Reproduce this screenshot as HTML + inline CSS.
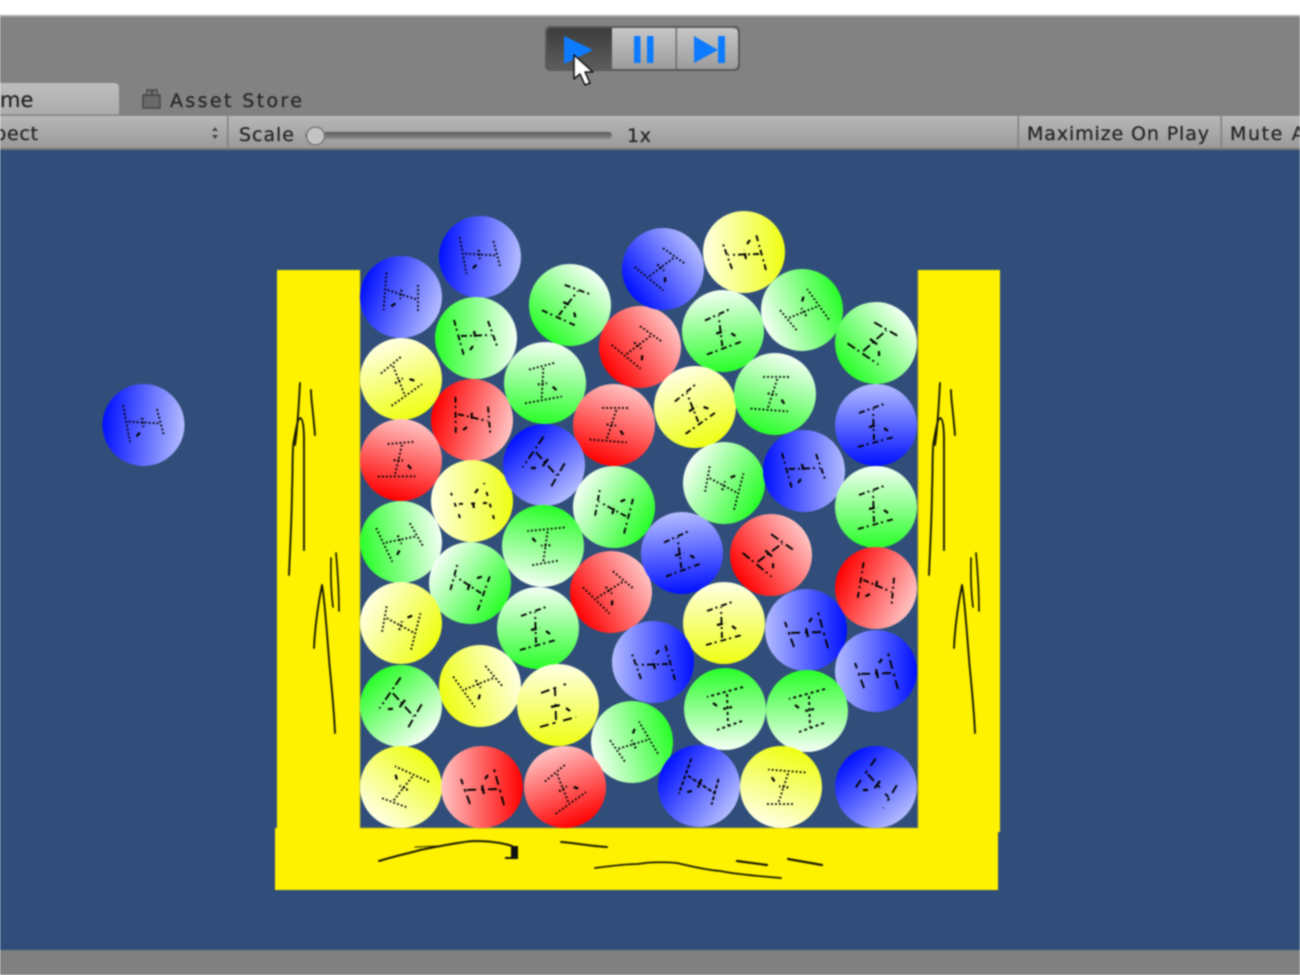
<!DOCTYPE html>
<html lang="en">
<head>
<meta charset="utf-8">
<title>Game view</title>
<style>
html,body{margin:0;padding:0;width:1300px;height:975px;overflow:hidden;background:#fff}
svg{display:block;filter:blur(.8px)}
text{font-family:"DejaVu Sans","Liberation Sans",sans-serif;font-size:19px;fill:#252525;stroke:#252525;stroke-width:.25}
.s{fill:none;stroke:#1a1a00;stroke-linecap:round;stroke-linejoin:round}
.g path{fill:none;stroke:#000;stroke-linecap:butt}
</style>
</head>
<body>
<svg width="1300" height="975" viewBox="0 0 1300 975" xmlns="http://www.w3.org/2000/svg">
<defs>
<linearGradient id="tb" x1="0" y1="0" x2="0" y2="1"><stop offset="0" stop-color="#b8b8b8"/><stop offset="1" stop-color="#999"/></linearGradient>
<linearGradient id="tab" x1="0" y1="0" x2="0" y2="1"><stop offset="0" stop-color="#bdbdbd"/><stop offset="1" stop-color="#ababab"/></linearGradient>
<linearGradient id="btn" x1="0" y1="0" x2="0" y2="1"><stop offset="0" stop-color="#c6c6c6"/><stop offset="1" stop-color="#9c9c9c"/></linearGradient>
<linearGradient id="btd" x1="0" y1="0" x2="0" y2="1"><stop offset="0" stop-color="#3c3c3c"/><stop offset="1" stop-color="#5c5c5c"/></linearGradient>
<linearGradient id="trk" x1="0" y1="0" x2="0" y2="1"><stop offset="0" stop-color="#5c5c5c"/><stop offset="1" stop-color="#8a8a8a"/></linearGradient>
<linearGradient id="gB" gradientUnits="userSpaceOnUse" x1="-41" y1="0" x2="41" y2="0"><stop offset="0" stop-color="#0010ff"/><stop offset="1" stop-color="#b4bcff"/></linearGradient>
<linearGradient id="gG" gradientUnits="userSpaceOnUse" x1="-41" y1="0" x2="41" y2="0"><stop offset="0" stop-color="#28ff28"/><stop offset="1" stop-color="#f4fff4"/></linearGradient>
<linearGradient id="gR" gradientUnits="userSpaceOnUse" x1="-41" y1="0" x2="41" y2="0"><stop offset="0" stop-color="#ff0000"/><stop offset="1" stop-color="#ffc4c4"/></linearGradient>
<linearGradient id="gY" gradientUnits="userSpaceOnUse" x1="-41" y1="0" x2="41" y2="0"><stop offset="0" stop-color="#eeff10"/><stop offset="1" stop-color="#ffffe4"/></linearGradient>
<g id="h" class="g" stroke-width="1.900">
<path d="M-22,-18 L-12,18"/><path d="M-15,-2 L16,-3"/><path d="M12,-17 L21,8"/>
<path d="M-6,12 L-3,8" stroke-dasharray="none" stroke-width="2.200"/>
<path d="M-2,-7 L0,2" stroke-width="2.200"/>
</g>
<g id="B"><circle r="41" fill="url(#gB)"/><use href="#h"/></g>
<g id="G"><circle r="41" fill="url(#gG)"/><use href="#h"/></g>
<g id="R"><circle r="41" fill="url(#gR)"/><use href="#h"/></g>
<g id="Y"><circle r="41" fill="url(#gY)"/><use href="#h"/></g>
<g id="sc">
<path class="s" stroke-width="1.900" d="M289,575 C290,550 292,513 292,490 C293,470 292,445 294,440 C296,430 297,420 300,418 C303,418 304,428 304,440 L304,550"/>
<path class="s" stroke-width="1.900" d="M295,445 C298,425 299,400 300,383"/>
<path class="s" stroke-width="1.900" d="M311,390 C311,400 313,410 315,435"/>
<path class="s" stroke-width="1.900" d="M314,648 C315,625 319,600 322,585 C325,600 328,650 330,670 C332,690 334,710 335,733"/>
<path class="s" stroke-width="1.700" d="M331,558 C331,570 330,585 333,607"/>
<path class="s" stroke-width="1.700" d="M336,553 C337,565 339,585 339,611"/>
</g>
</defs>

<rect width="1300" height="975" fill="#304e79"/>
<rect width="1300" height="15" fill="#fff"/>
<rect y="15" width="1300" height="100" fill="#828282"/>
<rect y="15" width="1300" height="2" fill="#a8a8a8"/>

<!-- play buttons -->
<rect x="545" y="26" width="195" height="45" rx="5" fill="#5a5a5a"/>
<path d="M612,28 H733 Q738,28 738,33 V64 Q738,69 733,69 H612 Z" fill="url(#btn)"/>
<path d="M552,28 H612 V69 H552 Q547,69 547,64 V33 Q547,28 552,28 Z" fill="url(#btd)"/>
<rect x="675.500" y="28" width="1.500" height="41" fill="#6e6e6e"/>
<path d="M564,36 L593,50 L564,64 Z" fill="#0d7bff"/>
<rect x="634" y="36" width="6.500" height="27" fill="#0d7bff"/>
<rect x="647" y="36" width="6.500" height="27" fill="#0d7bff"/>
<path d="M694,36 L718,50 L694,63 Z" fill="#0d7bff"/>
<rect x="718" y="36" width="7" height="27" fill="#0d7bff"/>

<!-- tabs -->
<path d="M0,83 H114 Q119,83 119,88 V115 H0 Z" fill="url(#tab)"/>
<text x="0" y="107" style="font-size:21px">me</text>
<path d="M143,95 H160 V108 H143 Z" fill="#6a6a6a" stroke="#454545" stroke-width="1.400"/>
<path d="M147,94 V90 H151 V94 M153,94 V90 H157 V94" fill="none" stroke="#454545" stroke-width="1.400"/>
<text x="170" y="107" textLength="132" lengthAdjust="spacing">Asset Store</text>

<!-- toolbar -->
<rect y="115" width="1300" height="34" fill="url(#tb)"/>
<rect y="114.500" width="1300" height="1.200" fill="#777"/>
<rect y="148" width="1300" height="2" fill="#777"/>
<text x="-30" y="140" textLength="68" lengthAdjust="spacing">Aspect</text>
<path d="M212,131 L215,127 L218,131 Z M212,135 L215,139 L218,135 Z" fill="#444"/>
<rect x="227" y="116" width="1.500" height="33" fill="#808080"/>
<text x="239" y="141" textLength="55" lengthAdjust="spacing">Scale</text>
<rect x="305" y="132" width="307" height="7" rx="3.500" fill="url(#trk)"/>
<circle cx="315.500" cy="136" r="9" fill="#c4c4c4" stroke="#7a7a7a" stroke-width="1.500"/>
<text x="627" y="142" textLength="24" lengthAdjust="spacing">1x</text>
<rect x="1017.500" y="116" width="1.500" height="33" fill="#808080"/>
<rect x="1220.500" y="116" width="1.500" height="33" fill="#808080"/>
<text x="1027" y="140" textLength="182" lengthAdjust="spacing">Maximize On Play</text>
<text x="1230" y="140" textLength="122" lengthAdjust="spacing">Mute Audio</text>

<!-- container -->
<rect x="277" y="270" width="83" height="560" fill="#fff200"/>
<rect x="918" y="270" width="82" height="562" fill="#fff200"/>
<rect x="275" y="828" width="723" height="62" fill="#fff200"/>
<path d="M360,270 V828 H918 V270" fill="none" stroke="#b3ae30" stroke-width="1"/>
<use href="#sc"/>
<use href="#sc" x="640"/>
<path class="s" stroke-width="2" d="M379,861 C395,856 410,853 420,850 C440,846 460,842 473,841 C485,841 500,842 512,846"/>
<path class="s" stroke-width="1" d="M415,847 L439,846"/>
<path d="M511,846 H518 V859 H505 V857 H511 Z" fill="#111"/>
<path class="s" stroke-width="2" d="M561,842 C575,843 590,846 607,847"/>
<path class="s" stroke-width="1.800" d="M595,868 C610,866 625,864 638,864 C650,862 665,862 677,863 C690,866 705,870 720,871 C740,875 760,876 781,878"/>
<path class="s" stroke-width="2.200" d="M737,861 L767,865"/>
<path class="s" stroke-width="2.200" d="M788,859 L822,865"/>

<!-- balls -->
<g stroke-dasharray="1.800 2.200">
<use href="#B" transform="translate(143.500 425) rotate(5)"/>
<use href="#B" transform="translate(480 257) rotate(5)"/>
<use href="#B" transform="translate(401 297) rotate(20)"/>
<use href="#G" transform="translate(476 338) rotate(0)" stroke-dasharray="6 3 2 4"/>
<use href="#Y" transform="translate(401 379) rotate(-110)"/>
<use href="#G" transform="translate(570 305) rotate(-50)" stroke-dasharray="6 3 2 4"/>
<use href="#G" transform="translate(545 383) rotate(-85)"/>
<use href="#R" transform="translate(472 420) rotate(15)" stroke-dasharray="6 3 2 4"/>
<use href="#R" transform="translate(640 347) rotate(-35)"/>
<use href="#R" transform="translate(614 425) rotate(-70)"/>
<use href="#B" transform="translate(663 269) rotate(-35)"/>
<use href="#Y" transform="translate(744 252) rotate(180)" stroke-dasharray="6 3 2 4"/>
<use href="#G" transform="translate(802 310) rotate(160)"/>
<use href="#G" transform="translate(723 331) rotate(-95)" stroke-dasharray="6 3 2 4"/>
<use href="#G" transform="translate(876 343) rotate(-40)" stroke-dasharray="9 3 2 4"/>
<use href="#Y" transform="translate(695 407) rotate(-110)" stroke-dasharray="6 3 2 4"/>
<use href="#G" transform="translate(775 394) rotate(-70)"/>
<use href="#B" transform="translate(876 425) rotate(-90)" stroke-dasharray="6 3 2 4"/>
<use href="#R" transform="translate(401 460) rotate(-75)"/>
<use href="#Y" transform="translate(472 501) rotate(180)" stroke-dasharray="4 8"/>
<use href="#B" transform="translate(544 465) rotate(50)" stroke-dasharray="9 3 2 4"/>
<use href="#G" transform="translate(614 507) rotate(-150)" stroke-dasharray="6 3 2 4"/>
<use href="#G" transform="translate(401 542) rotate(-10)"/>
<use href="#G" transform="translate(470 583) rotate(-145)" stroke-dasharray="6 3 2 4"/>
<use href="#G" transform="translate(543 546) rotate(100)"/>
<use href="#R" transform="translate(611 592) rotate(-30)"/>
<use href="#Y" transform="translate(401 623) rotate(-150)"/>
<use href="#G" transform="translate(538 628) rotate(-90)" stroke-dasharray="6 3 2 4"/>
<use href="#G" transform="translate(724 483) rotate(-150)"/>
<use href="#B" transform="translate(804 471) rotate(0)" stroke-dasharray="6 3 2 4"/>
<use href="#G" transform="translate(876 507) rotate(-90)" stroke-dasharray="6 3 2 4"/>
<use href="#B" transform="translate(682 553) rotate(-95)" stroke-dasharray="6 3 2 4"/>
<use href="#R" transform="translate(771 555) rotate(-35)" stroke-dasharray="9 3 2 4"/>
<use href="#R" transform="translate(876 588) rotate(25)" stroke-dasharray="6 3 2 4"/>
<use href="#Y" transform="translate(724 623) rotate(-90)" stroke-dasharray="6 3 2 4"/>
<use href="#B" transform="translate(806 630) rotate(180)" stroke-dasharray="9 4 3 5"/>
<use href="#Y" transform="translate(480 686) rotate(-20)"/>
<use href="#Y" transform="translate(558 705) rotate(-90)" stroke-dasharray="9 4 3 8"/>
<use href="#G" transform="translate(401 706) rotate(50)" stroke-dasharray="9 3 2 4"/>
<use href="#B" transform="translate(653 662) rotate(180)" stroke-dasharray="6 3 2 4"/>
<use href="#G" transform="translate(632 742) rotate(165)"/>
<use href="#Y" transform="translate(401 787) rotate(130)"/>
<use href="#R" transform="translate(482 787) rotate(180)" stroke-dasharray="9 4 3 5"/>
<use href="#R" transform="translate(565 787) rotate(-110)"/>
<use href="#B" transform="translate(876 671) rotate(180)" stroke-dasharray="9 4 3 5"/>
<use href="#G" transform="translate(725 709) rotate(90)" stroke-dasharray="3 3"/>
<use href="#G" transform="translate(807 711) rotate(90)" stroke-dasharray="3 3"/>
<use href="#B" transform="translate(699 786) rotate(35)" stroke-dasharray="4 2"/>
<use href="#Y" transform="translate(781 787) rotate(110)"/>
<use href="#B" transform="translate(876 787) rotate(50)" stroke-dasharray="9 6 3 8"/>
</g>

<!-- bottom bar -->
<rect y="950" width="1300" height="25" fill="#808080"/>

<!-- cursor -->
<path d="M574,55 L574,79 L580,74 L585,85 L590,83 L585,72 L593,72 Z" fill="#fff" stroke="#111" stroke-width="1.500" stroke-linejoin="round"/>
</svg>
</body>
</html>
